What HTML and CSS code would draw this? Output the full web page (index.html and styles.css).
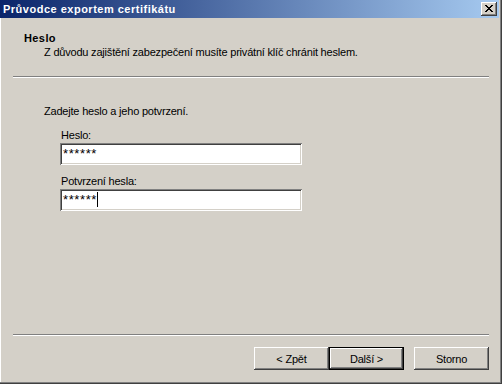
FILE: index.html
```html
<!DOCTYPE html>
<html lang="cs">
<head>
  <meta charset="UTF-8">
  <title>Průvodce exportem certifikátu</title>
  <link rel="stylesheet" href="styles.css">
</head>
<body>
  <div class="window">
    <div class="titlebar">
      <span class="title-text">Průvodce exportem certifikátu</span>
      <button class="close-btn" aria-label="Zavřít">
        <svg width="8" height="7" viewBox="0 0 8 7">
          <path d="M0 0h2v1h1v1h2v-1h1v-1h2v1h-1v1h-1v1h-1v1h1v1h1v1h1v1h-2v-1h-1v-1h-2v1h-1v1h-2v-1h1v-1h1v-1h1v-1h-1v-1h-1v-1h-1z" fill="#000"/>
        </svg>
      </button>
    </div>

    <div class="wizard-header">
      <div class="wizard-title">Heslo</div>
      <div class="wizard-subtitle">Z důvodu zajištění zabezpečení musíte privátní klíč chránit heslem.</div>
    </div>
    <div class="separator"></div>

    <div class="wizard-body">
      <p class="intro">Zadejte heslo a jeho potvrzení.</p>
      <div class="field">
        <label>Heslo:</label>
        <div class="edit">******</div>
      </div>
      <div class="field">
        <label>Potvrzení hesla:</label>
        <div class="edit">******<span class="caret"></span></div>
      </div>
    </div>

    <div class="separator"></div>
    <div class="button-row">
      <button class="btn">&lt; Zpět</button>
      <button class="btn default">Další &gt;</button>
      <button class="btn cancel">Storno</button>
    </div>
  </div>
</body>
</html>
```

FILE: styles.css
```css
body {
  margin: 0;
  background: #d4d0c8;
  font-family: 'Liberation Sans', Arial, sans-serif;
  font-size: 11px;
  letter-spacing: -0.2px;
  color: #000;
}
.window {
  width: 502px;
  height: 384px;
  box-sizing: border-box;
  padding-bottom: 2px;
  display: flex;
  flex-direction: column;
  background: #d4d0c8;
  box-shadow: inset -1px -1px 0 #404040, inset -2px -2px 0 #808080, inset 1px 0 0 #fff;
}
.titlebar {
  height: 18px;
  margin-right: 3px;
  display: flex;
  align-items: center;
  justify-content: space-between;
  background: linear-gradient(to right, #0a246a, #a6caf0);
}
.title-text {
  color: #fff;
  font-weight: bold;
  letter-spacing: 0.5px;
  padding-left: 3px;
}
.close-btn {
  width: 16px;
  height: 14px;
  margin-right: 2px;
  padding: 0;
  border: none;
  background: #d4d0c8;
  display: flex;
  align-items: center;
  justify-content: center;
  box-shadow: inset -1px -1px 0 #404040, inset 1px 1px 0 #fff, inset -2px -2px 0 #808080;
}
.close-btn svg {
  display: block;
  margin: -1px 0 0 -1px;
}
.wizard-header {
  padding: 14px 0 0 24px;
  line-height: 13px;
}
.wizard-title {
  font-weight: bold;
  letter-spacing: 0.4px;
}
.wizard-subtitle {
  margin: 1px 0 17px 20px;
}
.separator {
  height: 0;
  margin: 0 13px;
  border-top: 1px solid #808080;
  border-bottom: 1px solid #fff;
}
.wizard-body {
  flex: 1;
  padding: 27px 0 0 44px;
  line-height: 13px;
}
.intro {
  margin: 0 0 10px;
}
.field {
  margin: 0 0 9px 16px;
}
.field label {
  display: block;
  margin-left: 1px;
  line-height: 14px;
  margin-bottom: 1px;
}
.edit {
  width: 242px;
  height: 22px;
  box-sizing: border-box;
  padding: 4px 0 0 3px;
  background: #fff;
  color: #000;
  font-size: 13px;
  letter-spacing: 0.6px;
  line-height: 14px;
  display: flex;
  align-items: flex-start;
  box-shadow: inset 1px 1px 0 #808080, inset -1px -1px 0 #fff, inset 2px 2px 0 #404040, inset -2px -2px 0 #d4d0c8;
}
.caret {
  width: 1px;
  height: 15px;
  margin: -1px 0 0 0;
  background: #000;
}
.button-row {
  display: flex;
  justify-content: flex-end;
  padding: 11px 13px 12px 0;
}
.btn {
  width: 75px;
  height: 23px;
  padding: 0;
  border: none;
  background: #d4d0c8;
  font-family: inherit;
  font-size: 11px;
  letter-spacing: inherit;
  color: #000;
  box-shadow: inset -1px -1px 0 #404040, inset 1px 1px 0 #fff, inset -2px -2px 0 #808080;
}
.btn.default {
  box-shadow: inset 0 0 0 1px #000, inset -2px -2px 0 #404040, inset 2px 2px 0 #fff, inset -3px -3px 0 #808080;
}
.btn.cancel {
  margin-left: 10px;
}
```
